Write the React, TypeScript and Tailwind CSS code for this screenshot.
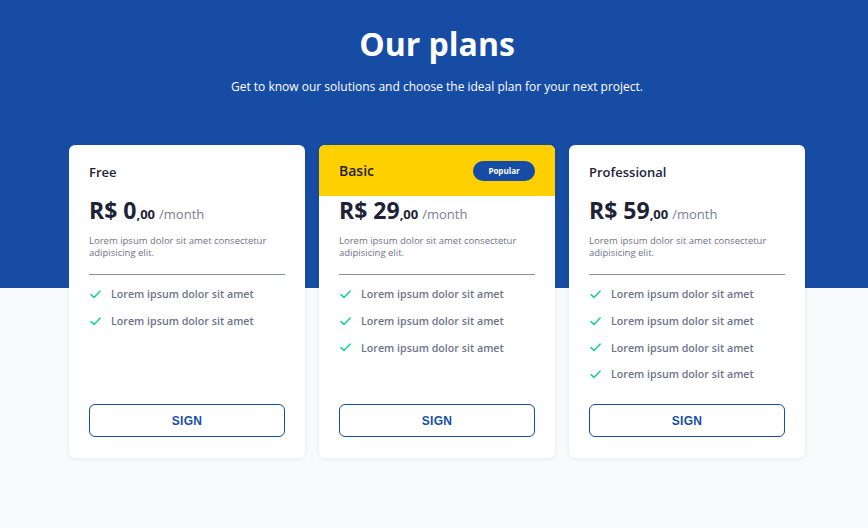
import React from "react";

type Plan = {
  name: string;
  price: string;
  features: number;
  popular?: boolean;
};

const plans: Plan[] = [
  { name: "Free", price: "0", features: 2 },
  { name: "Basic", price: "29", features: 3, popular: true },
  { name: "Professional", price: "59", features: 4 },
];

function Check() {
  return (
    <svg width="11" height="9" viewBox="0 0 11 9" fill="none" className="shrink-0">
      <path d="M1 4.6 L4 7.5 L10 1.2" stroke="#1fd196" strokeWidth="1.6" strokeLinecap="round" strokeLinejoin="round" />
    </svg>
  );
}

function Card({ plan }: { plan: Plan }) {
  return (
    <div className="w-[236px] h-[313px] bg-white rounded-[6px] shadow-[0_1px_4px_rgba(20,30,60,0.08)] flex flex-col overflow-hidden">
      <div
        className={
          plan.popular
            ? "h-[51px] shrink-0 bg-[#ffd000] px-5 flex items-center justify-between"
            : "h-[51px] shrink-0 px-5 pt-[4px] flex items-center justify-between"
        }
      >
        <span className={plan.popular ? "text-[14px] font-semibold text-[#1e2238]" : "text-[13px] font-semibold text-[#1e2238]"}>
          {plan.name}
        </span>
        {plan.popular && (
          <span className="h-[20px] w-[62px] rounded-full bg-[#174ca5] text-white text-[8px] font-bold flex items-center justify-center">
            Popular
          </span>
        )}
      </div>
      <div className="px-5 flex flex-col flex-1">
        <div className="mt-0 h-[28px] flex items-baseline text-[#1e2238]">
          <span className="text-[23px] font-bold leading-[28px]">R$ {plan.price}</span>
          <span className="text-[13px] font-bold">,00</span>
          <span className="text-[13px] text-[#7a7d92] ml-1">/month</span>
        </div>
        <p className="mt-[11px] text-[9.5px] leading-[12px] text-[#6f7288]">
          Lorem ipsum dolor sit amet consectetur adipisicing elit.
        </p>
        <div className="mt-[15px] h-px bg-[#8a8ca0]" />
        <ul className="mt-[6px] flex flex-col">
          {Array.from({ length: plan.features }).map((_, i) => (
            <li key={i} className="h-[26.7px] flex items-center gap-[10px] pl-[1px]">
              <Check />
              <span className="text-[10.7px] font-semibold text-[#6f7389]">Lorem ipsum dolor sit amet</span>
            </li>
          ))}
        </ul>
        <button className="mt-auto mb-[21px] h-[33px] w-full rounded-[6px] border border-[#174ca5] text-[#174ca5] text-[12px] font-bold tracking-[0.3px] [font-family:'Liberation_Sans',Arial,sans-serif]">
          SIGN
        </button>
      </div>
    </div>
  );
}

export default function App() {
  return (
    <div className="w-[868px] h-[528px] relative bg-[#f8fafc] [font-family:'Open_Sans',sans-serif] overflow-hidden">
      <div className="absolute left-0 top-0 w-full h-[288px] bg-[#174ca5]" />
      <div className="relative flex flex-col items-center pl-[6px]">
        <h1 className="mt-[22px] text-[32px] leading-[44px] font-bold text-white">Our plans</h1>
        <p className="mt-[12px] text-[12px] leading-[17px] text-white">
          Get to know our solutions and choose the ideal plan for your next project.
        </p>
        <div className="mt-[50px] flex gap-[14px]">
          {plans.map((p) => (
            <Card key={p.name} plan={p} />
          ))}
        </div>
      </div>
    </div>
  );
}
